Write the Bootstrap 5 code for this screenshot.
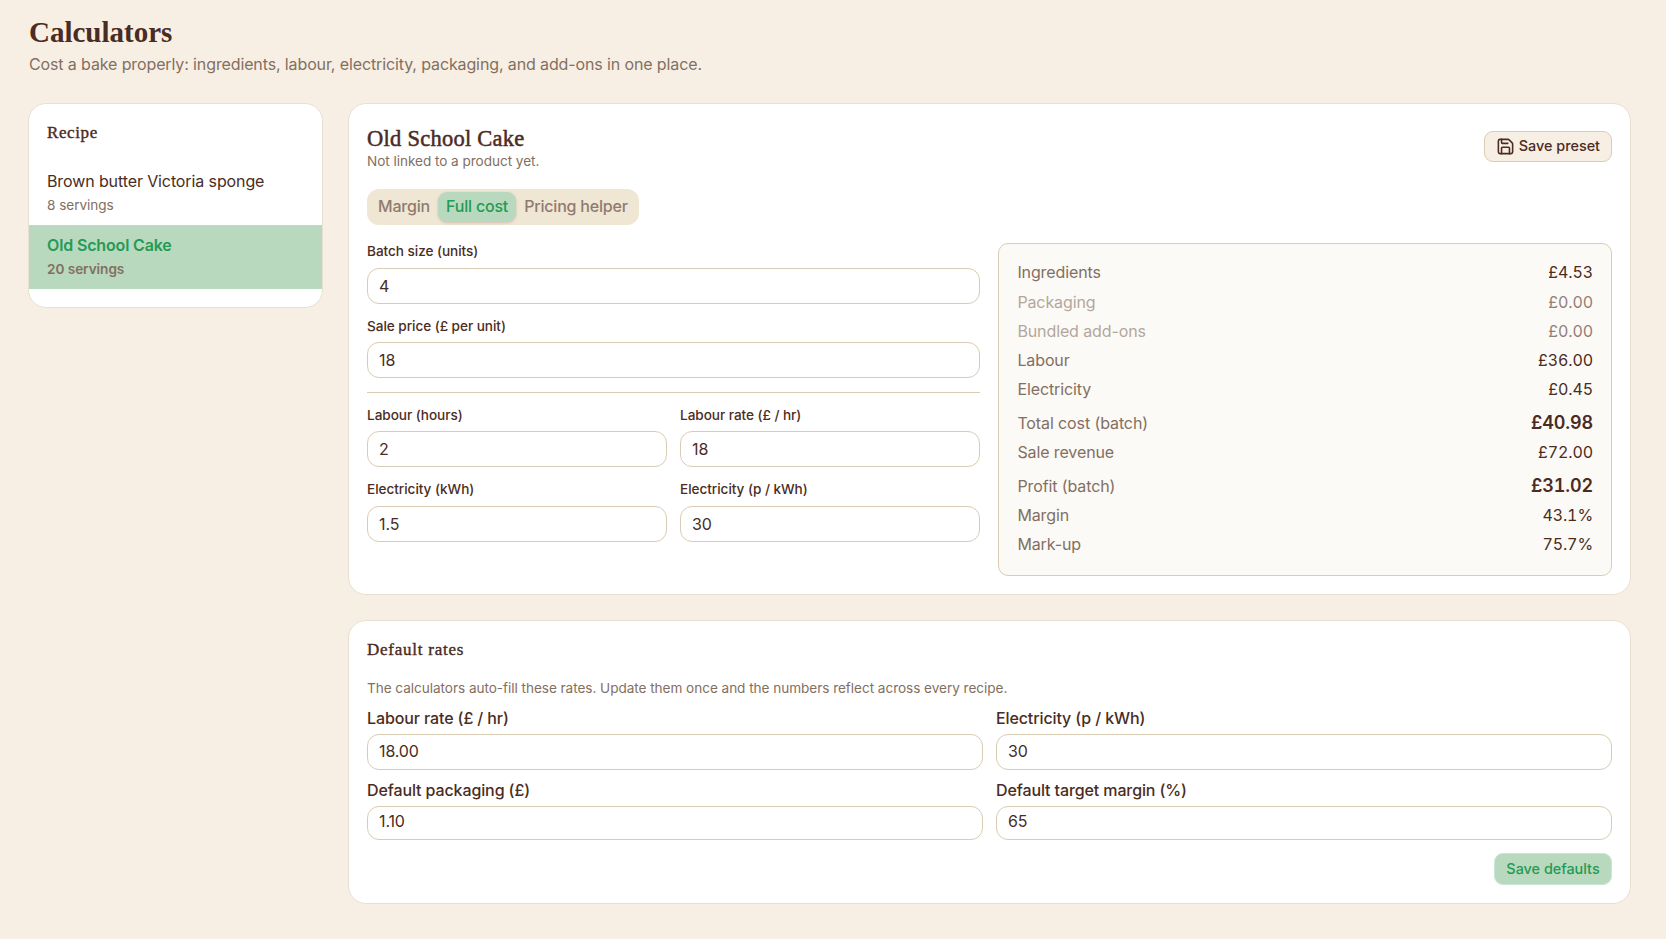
<!DOCTYPE html>
<html lang="en">
<head>
<meta charset="utf-8">
<meta name="viewport" content="width=device-width, initial-scale=1">
<title>Calculators</title>
<link href="https://cdn.jsdelivr.net/npm/bootstrap@5.3.0/dist/css/bootstrap.min.css" rel="stylesheet">
<style>
  :root { --ink:#4a2c23; --muted-ink:#836f61; --line:#d9ccb4; --soft:#e9dfd0; --mint:#b8d9be; --leaf:#259a54; --cream:#f8efe4; }
  body { background:var(--cream); color:var(--ink); font-family:Inter,"Liberation Sans",sans-serif; font-size:16px; line-height:24px; letter-spacing:-.11px; }
  h1,h2,h3 { font-family:"Liberation Serif",serif; margin:0; color:var(--ink); }
  h1 { font-size:29px; line-height:38px; font-weight:700; letter-spacing:0; }
  h2 { font-size:22.5px; line-height:27px; padding-top:1px; font-weight:400; -webkit-text-stroke:.5px var(--ink); letter-spacing:.25px; }
  h3 { font-size:17px; line-height:24px; font-weight:400; -webkit-text-stroke:.4px var(--ink); letter-spacing:.75px; }
  .page { padding:13px 35px 0 28px; }
  .page-head { padding-left:1px; }
  .page-head p { padding-top:1px; letter-spacing:-.12px; }
  .layout { display:grid; grid-template-columns:295px 1fr; gap:25px; margin-top:27px; }
  .panel { background:#fff; border:1px solid var(--soft); border-radius:18px; }
  .soft-text { color:var(--muted-ink); }
  .fine { font-size:13.6px; line-height:20px; letter-spacing:-.05px; }

  .recipes { padding:17px 0 18px; }
  .recipes h3 { padding:0 18px; margin-bottom:16px; letter-spacing:.6px; }
  .recipe { padding:7.5px 18px; height:64px; }
  .recipe .fine { line-height:25px; }
  .recipe.current { background:var(--mint); box-shadow:inset 0 1px #c8d8bb; font-weight:600; color:var(--leaf); letter-spacing:-.15px; }

  .calculator { padding:20px 18px 18px; }
  .calculator .fine { line-height:19px; }
  .tabs { background:#f0e6d4; border-radius:12px; height:36px; padding:3px; margin:18px 0; }
  .tabs button { border:0; background:none; color:#8f7b6e; font-weight:500; letter-spacing:-.19px; padding:0 8px 1px; height:30px; line-height:27px; border-radius:9px; white-space:nowrap; }
  .tabs button.current { background:var(--mint); color:var(--leaf); box-shadow:0 1px 3px #4a2c2333; }
  .split { display:grid; grid-template-columns:613fr 614fr; gap:18px; }
  .pair { display:grid; grid-template-columns:1fr 1fr; column-gap:13px; }
  .form-label { display:block; font-weight:500; margin:0 0 4px; }
  .split .form-label { font-size:13.6px; line-height:17px; letter-spacing:-.05px; margin-bottom:8px; }
  .split .form-label.low { padding-top:1px; margin-bottom:7px; }
  .form-control { border-color:var(--line); border-radius:12px; height:36px; padding:0 11px; color:var(--ink); font-size:16px; line-height:24px; letter-spacing:-.13px; }
  .defaults .form-control { padding-bottom:2px; }
  .defaults .form-control.short { height:34px; padding-bottom:4px; }
  .rule { height:1px; background:var(--line); margin:14px 0 13px; }
  .summary { background:#fcfaf6; border:1px solid var(--line); border-radius:10px; padding:16.4px 18px 0 18.4px; height:333px; }
  .line-item { height:29.2px; }
  .line-item span:last-child, .line-item strong { font-variant-numeric:tabular-nums; color:var(--ink); }
  .line-item.big { height:33.9px; padding-top:4.4px; }
  .line-item strong { font-size:18px; font-weight:600; }
  .line-item.empty { opacity:.6; }

  .defaults { padding:17px 18px 18px; margin-top:25px; }
  .btn { font-size:14.4px; font-weight:500; letter-spacing:0; border-radius:9px; padding:0 11px; height:32px; line-height:30px; }
  .btn-cream, .btn-cream:hover { background:var(--cream); border-color:var(--line); color:var(--ink); height:31px; width:128px; padding:0 11px 1px; line-height:28px; margin-top:7px; }
  .btn-mint, .btn-mint:hover { background:var(--mint); border-color:#c9e5d3; color:var(--leaf); width:118px; }
</style>
</head>
<body>
<main class="page">
  <header class="page-head">
    <h1>Calculators</h1>
    <p class="soft-text mb-0">Cost a bake properly: ingredients, labour, electricity, packaging, and add-ons in one place.</p>
  </header>

  <div class="layout align-items-start">
    <aside class="panel recipes">
      <h3>Recipe</h3>
      <div class="recipe"><div>Brown butter Victoria sponge</div><div class="fine soft-text">8 servings</div></div>
      <div class="recipe current"><div>Old School Cake</div><div class="fine soft-text">20 servings</div></div>
    </aside>

    <div>
      <section class="panel calculator">
        <div class="d-flex justify-content-between align-items-start">
          <div>
            <h2>Old School Cake</h2>
            <div class="fine soft-text">Not linked to a product yet.</div>
          </div>
          <button type="button" class="btn btn-cream d-inline-flex align-items-center justify-content-between text-nowrap">
            <svg width="19" height="19" viewBox="0 0 24 24" fill="none" stroke="currentColor" stroke-width="2" stroke-linecap="round" stroke-linejoin="round" aria-hidden="true"><path d="M15.2 3a2 2 0 0 1 1.4.6l3.8 3.8a2 2 0 0 1 .6 1.4V19a2 2 0 0 1-2 2H5a2 2 0 0 1-2-2V5a2 2 0 0 1 2-2z"/><path d="M17 21v-7a1 1 0 0 0-1-1H8a1 1 0 0 0-1 1v7"/><path d="M7 3v4a1 1 0 0 0 1 1h7"/></svg>
            Save preset
          </button>
        </div>

        <div class="d-flex">
          <div class="tabs d-flex">
            <button type="button">Margin</button>
            <button type="button" class="current">Full cost</button>
            <button type="button">Pricing helper</button>
          </div>
        </div>

        <div class="split">
          <form>
            <label class="form-label" for="batch">Batch size (units)</label>
            <input class="form-control" id="batch" value="4">
            <label class="form-label low" for="price" style="margin-top:13px">Sale price (£ per unit)</label>
            <input class="form-control" id="price" value="18">
            <div class="rule"></div>
            <div class="pair" style="row-gap:14px">
              <div><label class="form-label low" for="hours">Labour (hours)</label><input class="form-control" id="hours" value="2"></div>
              <div><label class="form-label low" for="rate">Labour rate (£ / hr)</label><input class="form-control" id="rate" value="18"></div>
              <div><label class="form-label" for="kwh">Electricity (kWh)</label><input class="form-control" id="kwh" value="1.5"></div>
              <div><label class="form-label" for="pence">Electricity (p / kWh)</label><input class="form-control" id="pence" value="30"></div>
            </div>
          </form>
          <div class="summary soft-text">
            <div class="line-item d-flex justify-content-between align-items-baseline"><span>Ingredients</span><span>£4.53</span></div>
            <div class="line-item empty d-flex justify-content-between align-items-baseline"><span>Packaging</span><span>£0.00</span></div>
            <div class="line-item empty d-flex justify-content-between align-items-baseline"><span>Bundled add-ons</span><span>£0.00</span></div>
            <div class="line-item d-flex justify-content-between align-items-baseline"><span>Labour</span><span>£36.00</span></div>
            <div class="line-item d-flex justify-content-between align-items-baseline"><span>Electricity</span><span>£0.45</span></div>
            <div class="line-item big d-flex justify-content-between align-items-baseline"><span>Total cost (batch)</span><strong>£40.98</strong></div>
            <div class="line-item d-flex justify-content-between align-items-baseline"><span>Sale revenue</span><span>£72.00</span></div>
            <div class="line-item big d-flex justify-content-between align-items-baseline"><span>Profit (batch)</span><strong>£31.02</strong></div>
            <div class="line-item d-flex justify-content-between align-items-baseline"><span>Margin</span><span>43.1%</span></div>
            <div class="line-item d-flex justify-content-between align-items-baseline"><span>Mark-up</span><span>75.7%</span></div>
          </div>
        </div>
      </section>

      <section class="panel defaults">
        <h3>Default rates</h3>
        <p class="fine soft-text mt-3 mb-2">The calculators auto-fill these rates. Update them once and the numbers reflect across every recipe.</p>
        <div class="pair" style="row-gap:8px">
          <div><label class="form-label" for="d1">Labour rate (£ / hr)</label><input class="form-control" id="d1" value="18.00"></div>
          <div><label class="form-label" for="d2">Electricity (p / kWh)</label><input class="form-control" id="d2" value="30"></div>
          <div><label class="form-label" for="d3">Default packaging (£)</label><input class="form-control short" id="d3" value="1.10"></div>
          <div><label class="form-label" for="d4">Default target margin (%)</label><input class="form-control short" id="d4" value="65"></div>
        </div>
        <div class="d-flex justify-content-end" style="margin-top:13px"><button type="button" class="btn btn-mint text-nowrap">Save defaults</button></div>
      </section>
    </div>
  </div>
</main>
<script src="https://cdn.jsdelivr.net/npm/bootstrap@5.3.0/dist/js/bootstrap.bundle.min.js"></script>
</body>
</html>
